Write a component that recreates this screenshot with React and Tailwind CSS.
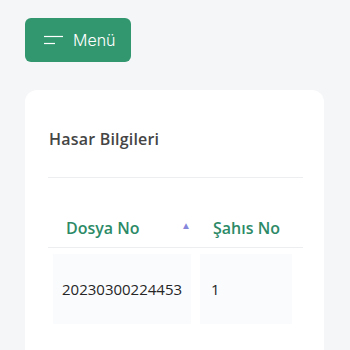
import React from 'react';

const rows = [{ dosya: '20230300224453', sahis: '1' }];

export default function App() {
  return (
    <div className="h-[350px] overflow-hidden bg-[#f5f6f8] px-[25px] pt-[18px]" style={{ fontFamily: '"Open Sans", sans-serif' }}>
      <button
        className="flex h-[44px] w-[106px] items-center gap-[10px] rounded-[6px] bg-[#32976f] pl-[19px] text-white"
        style={{ fontFamily: 'Inter, sans-serif' }}
      >
        <svg width="19" height="10" viewBox="0 0 19 10" fill="none">
          <line x1="0" y1="1.5" x2="19" y2="1.5" stroke="white" strokeWidth="1.2" />
          <line x1="0" y1="8.5" x2="11" y2="8.5" stroke="white" strokeWidth="1.2" />
        </svg>
        <span className="text-[16px] font-light">Menü</span>
      </button>

      <div className="mt-[28px] h-[300px] w-[299px] rounded-t-[12px] bg-white px-[23px] pt-[37px]">
        <h2 className="pl-px text-[16px] font-semibold tracking-[0.2px] text-[#454545]">Hasar Bilgileri</h2>
        <div className="mt-[26px] h-px w-[255px] bg-[#eceef0]" />

        <div className="mt-[30px] w-[255px]">
          <div className="grid h-[40px] grid-cols-[150px_1fr] border-b border-[#eceef0]">
            <div className="flex items-center justify-between pl-[18px] pr-[7px]">
              <span className="text-[16px] font-semibold text-[#2d8a67]">Dosya No</span>
              <span className="mb-[6px] text-[10px] leading-none text-[#8587dc]">▲</span>
            </div>
            <div className="flex items-center pl-[15px]">
              <span className="text-[16px] font-semibold text-[#2d8a67]">Şahıs No</span>
            </div>
          </div>
          {rows.map((r, i) => (
            <div key={i} className="grid grid-cols-[150px_1fr] pt-[6px]">
              <div className="ml-[5px] flex h-[70px] w-[138px] items-center bg-[#fafbfd] pl-[9px] text-[15px] text-[#262626]">
                {r.dosya}
              </div>
              <div className="ml-[2px] flex h-[70px] w-[92px] items-center bg-[#fafbfd] pl-[11px] text-[15px] text-[#262626]">
                {r.sahis}
              </div>
            </div>
          ))}
        </div>
      </div>
    </div>
  );
}
